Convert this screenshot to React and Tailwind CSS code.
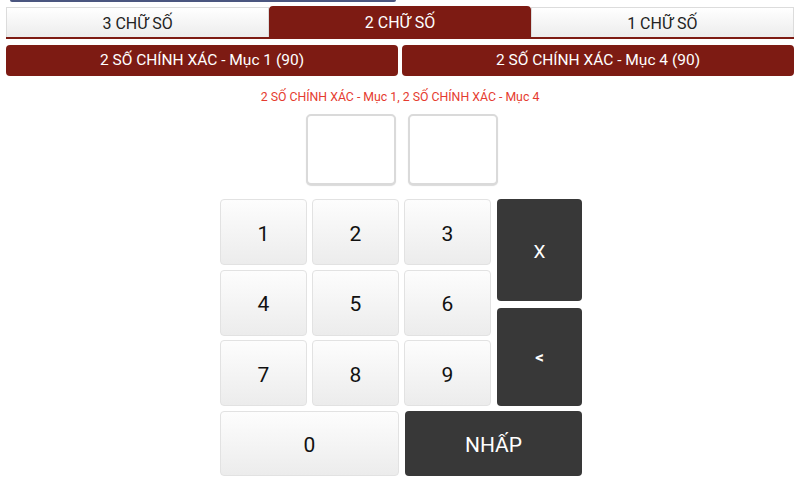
const font = { fontFamily: 'Roboto, "Noto Sans", sans-serif' };

function Key({ children, className = "" }) {
  return (
    <button className={"flex items-center justify-center pt-[5px] rounded-[4px] border border-[#e2e2e2] bg-gradient-to-b from-[#fdfdfd] to-[#ececec] text-[21px] text-[#111] " + className}>
      {children}
    </button>
  );
}

function DarkKey({ children, className = "" }) {
  return (
    <button className={"flex items-center justify-center rounded-[4px] bg-[#383838] text-white " + className}>
      {children}
    </button>
  );
}

export default function App() {
  return (
    <div className="w-[800px] h-[498px] bg-white overflow-hidden" style={font}>
      <div className="ml-[10px] w-[386px] h-[2px] bg-[#4b5680] rounded-b" />

      {/* tabs */}
      <div className="mx-[6px] mt-[4px] flex border-b-2 border-[#7d1b13]">
        <button className="flex-1 h-[30px] mt-[1px] flex items-center justify-center pt-[2px] border border-b-0 border-[#dcdcdc] bg-gradient-to-b from-[#ffffff] to-[#ececec] text-[16px] text-[#222]">
          3 CHỮ SỐ
        </button>
        <button className="flex-1 h-[31px] flex items-center justify-center pt-[2px] rounded-t-[4px] bg-[#7d1b13] text-[16px] text-white">
          2 CHỮ SỐ
        </button>
        <button className="flex-1 h-[30px] mt-[1px] flex items-center justify-center pt-[2px] border border-b-0 border-[#dcdcdc] bg-gradient-to-b from-[#ffffff] to-[#ececec] text-[16px] text-[#222]">
          1 CHỮ SỐ
        </button>
      </div>

      {/* selected categories */}
      <div className="mx-[6px] mt-[6px] flex gap-[4px]">
        <button className="flex-1 h-[31px] flex items-center justify-center pt-[1px] rounded-[4px] bg-[#7d1b13] text-[15.5px] text-white">
          2 SỐ CHÍNH XÁC - Mục 1 (90)
        </button>
        <button className="flex-1 h-[31px] flex items-center justify-center pt-[1px] rounded-[4px] bg-[#7d1b13] text-[15.5px] text-white">
          2 SỐ CHÍNH XÁC - Mục 4 (90)
        </button>
      </div>

      <p className="mt-[14px] text-center text-[12.3px] leading-[14px] text-[#e53b2f]">
        2 SỐ CHÍNH XÁC - Mục 1, 2 SỐ CHÍNH XÁC - Mục 4
      </p>

      {/* entered digits */}
      <div className="mt-[10px] flex justify-center gap-[12px] pl-[4px]">
        <div className="w-[90px] h-[71px] rounded-[5px] border-2 border-[#dadada] bg-white shadow-[0_1px_1px_rgba(0,0,0,0.15)]" />
        <div className="w-[90px] h-[71px] rounded-[5px] border-2 border-[#dadada] bg-white shadow-[0_1px_1px_rgba(0,0,0,0.15)]" />
      </div>

      {/* keypad */}
      <div className="mt-[14px] ml-[220px] grid grid-cols-[87px_87px_87px_86px] grid-rows-[66px_66px_66px_65px] gap-x-[5px] gap-y-[4.5px]">
        <Key>1</Key>
        <Key>2</Key>
        <Key>3</Key>
        <div className="row-span-3 ml-[1px] flex flex-col gap-[7px]">
          <DarkKey className="flex-1 pt-[5px] text-[19px]">X</DarkKey>
          <DarkKey className="flex-1 pt-[2px] text-[17px] font-bold">&lt;</DarkKey>
        </div>
        <Key>4</Key>
        <Key>5</Key>
        <Key>6</Key>
        <Key>7</Key>
        <Key>8</Key>
        <Key>9</Key>
        <Key className="col-span-2">0</Key>
        <DarkKey className="col-span-2 ml-[1px] pt-[5px] text-[21px]">NHẤP</DarkKey>
      </div>
    </div>
  );
}
